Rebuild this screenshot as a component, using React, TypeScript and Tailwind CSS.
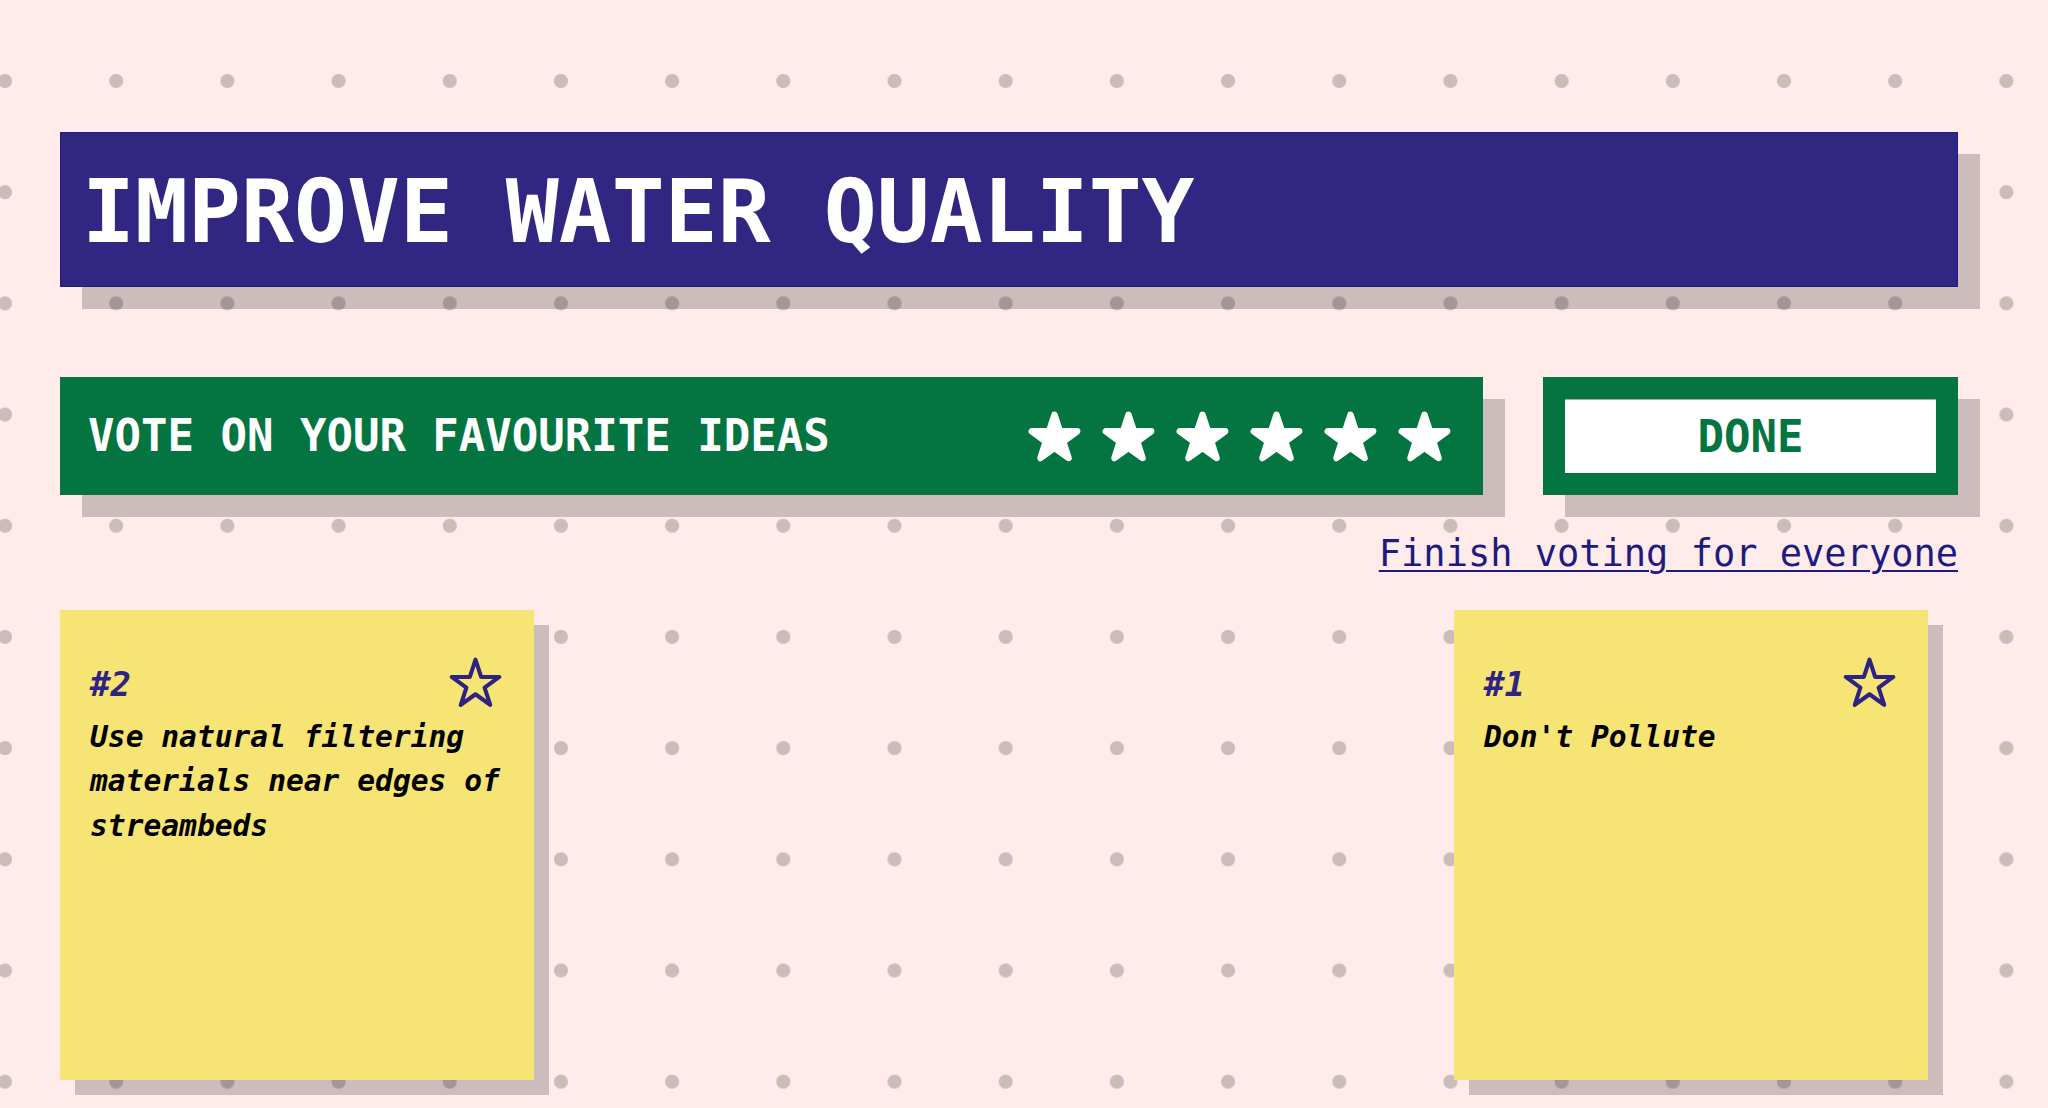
import React from 'react';

// regular five-point star, centre (50,52), outer radius 46
const STAR_POINTS =
  '50,6 60.33,37.79 93.75,37.79 66.71,57.43 77.04,89.21 50,69.57 22.96,89.21 33.29,57.43 6.25,37.79 39.67,37.79';

const Star: React.FC<{ filled?: boolean }> = ({ filled }) => (
  <svg viewBox="0 0 100 96" className="w-[55px] h-[53px] shrink-0" aria-hidden="true">
    {filled ? (
      <polygon
        points={STAR_POINTS}
        transform="translate(50 52) scale(0.94) translate(-50 -52)"
        fill="#ffffff"
        stroke="#ffffff"
        strokeWidth={12.8}
        strokeLinejoin="round"
      />
    ) : (
      <polygon
        points={STAR_POINTS}
        transform="translate(50 52) scale(0.99) translate(-50 -52)"
        fill="none"
        stroke="#2e2383"
        strokeWidth={7.5}
        strokeLinejoin="round"
      />
    )}
  </svg>
);

interface IdeaCardProps {
  rank: number;
  text: string;
}

const IdeaCard: React.FC<IdeaCardProps> = ({ rank, text }) => (
  <div className="w-[474px] h-[470px] bg-[#f6e474] shadow-[15px_15px_0_rgba(0,0,0,0.2)] pt-[46px] pl-[30px] pr-[31px]">
    <div className="flex items-start justify-between">
      <span className="mt-[8px] text-[34px] leading-[40px] font-bold italic text-[#2e2383]">#{rank}</span>
      <Star />
    </div>
    <p className="mt-[6px] text-[29.6px] leading-[44.4px] font-bold italic text-black">{text}</p>
  </div>
);

export default function App() {
  return (
    <div className="min-h-screen w-full bg-[#ffecea] bg-[radial-gradient(circle,#cbbcbc_6.5px,transparent_7.5px)] bg-[length:111.2px_111.2px] bg-[position:-50.6px_25.4px] pl-[60px] pr-[90px] pt-[132px] pb-[13px] font-['DejaVu_Sans_Mono',monospace]">
      {/* Title */}
      <div className="border border-[#1f1a8c] bg-[#312681] pl-[21px] pt-[35px] pb-[30px] shadow-[22px_22px_0_rgba(0,0,0,0.2)]">
        <h1 className="text-[88px] leading-[88px] font-bold text-white">IMPROVE WATER QUALITY</h1>
      </div>

      {/* Voting bar */}
      <div className="mt-[90px] flex h-[118px] gap-[60px]">
        <div className="flex flex-1 items-center justify-between bg-[#047540] pl-[28px] pr-[31px] shadow-[22px_22px_0_rgba(0,0,0,0.2)]">
          <span className="text-[44px] leading-none font-semibold text-white">VOTE ON YOUR FAVOURITE IDEAS</span>
          <div className="flex gap-[19px]">
            {[0, 1, 2, 3, 4, 5].map((i) => (
              <Star key={i} filled />
            ))}
          </div>
        </div>
        <div className="w-[415px] bg-[#047540] p-[22px] shadow-[22px_22px_0_rgba(0,0,0,0.2)]">
          <button className="h-full w-full border-t border-[#a9a9a9] bg-white text-[44px] leading-none font-semibold text-[#047540]">
            DONE
          </button>
        </div>
      </div>

      <div className="mt-[37px] flex justify-end">
        <a
          href="#"
          className="text-[37px] leading-[44px] text-[#1d1a80] underline decoration-[2px] underline-offset-[4px]"
        >
          Finish voting for everyone
        </a>
      </div>

      {/* Idea cards */}
      <div className="mt-[34px] flex justify-between pr-[30px]">
        <IdeaCard rank={2} text="Use natural filtering materials near edges of streambeds" />
        <IdeaCard rank={1} text="Don't Pollute" />
      </div>
    </div>
  );
}
